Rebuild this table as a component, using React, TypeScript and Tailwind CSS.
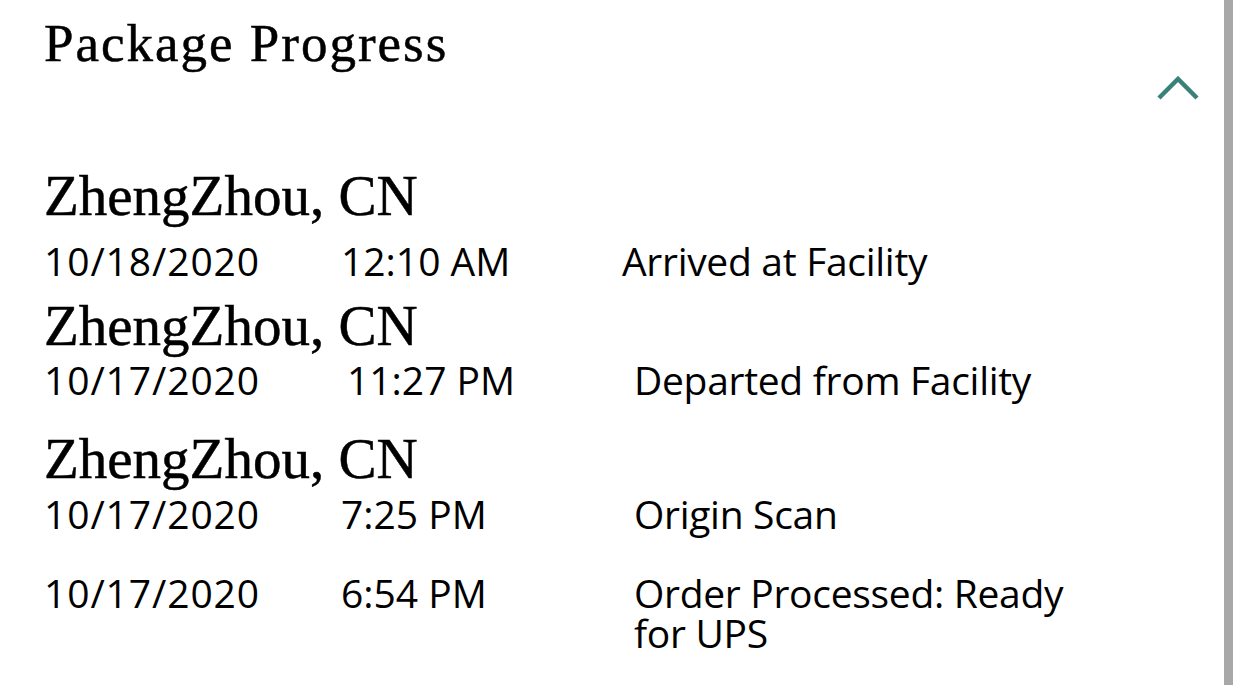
const serif = { fontFamily: '"Liberation Serif", "Times New Roman", serif' };

type Row = { date: string; time: string; desc: string; timeCls: string; dateCls: string; gap: string };

function Event({ date, time, desc, timeCls, dateCls, gap }: Row) {
  return (
    <div className={`flex items-start text-[39px] leading-[40px] text-black ${gap}`} style={{ fontFamily: '"Open Sans", sans-serif' }}>
      <span className={`shrink-0 tracking-[0.9px] ${dateCls}`}>{date}</span>
      <span className={`shrink-0 ${timeCls}`}>{time}</span>
      <span className="w-[440px] tracking-[-0.3px]">{desc}</span>
    </div>
  );
}

function City({ gap }: { gap: string }) {
  return (
    <h3 className={`text-[57px] leading-[57px] text-black [-webkit-text-stroke:0.5px_black] ${gap}`} style={serif}>
      ZhengZhou, CN
    </h3>
  );
}

export default function App() {
  return (
    <div className="flex h-[685px] w-[1242px] overflow-hidden bg-white">
      <div className="flex-1 pl-[44px] pr-[25px] pt-[17px]">
        <h1 className="text-[53px] leading-[53px] tracking-[2px] text-black [-webkit-text-stroke:0.5px_black]" style={serif}>
          Package Progress
        </h1>
        <div className="mt-[6px] flex justify-end">
          <svg width="42" height="24" viewBox="0 0 42 24" fill="none">
            <polyline points="2,22 21,3 40,22" stroke="#3a8179" strokeWidth="4.5" />
          </svg>
        </div>

        <City gap="mt-[67px]" />
        <Event gap="mt-[17px]" date="10/18/2020" time="12:10 AM" desc="Arrived at Facility" dateCls="w-[297px]" timeCls="w-[281px]" />
        <City gap="mt-[16px]" />
        <Event gap="mt-[6px]" date="10/17/2020" time="11:27 PM" desc="Departed from Facility" dateCls="w-[303px]" timeCls="w-[287px]" />
        <City gap="mt-[30px]" />
        <Event gap="mt-[7px]" date="10/17/2020" time="7:25 PM" desc="Origin Scan" dateCls="w-[297px]" timeCls="w-[293px]" />
        <Event gap="mt-[39px]" date="10/17/2020" time="6:54 PM" desc="Order Processed: Ready for UPS" dateCls="w-[297px]" timeCls="w-[293px]" />
      </div>
      <div className="w-[9px] shrink-0 bg-[#a8a8a8]" />
      <div className="w-[9px] shrink-0 bg-white" />
    </div>
  );
}
